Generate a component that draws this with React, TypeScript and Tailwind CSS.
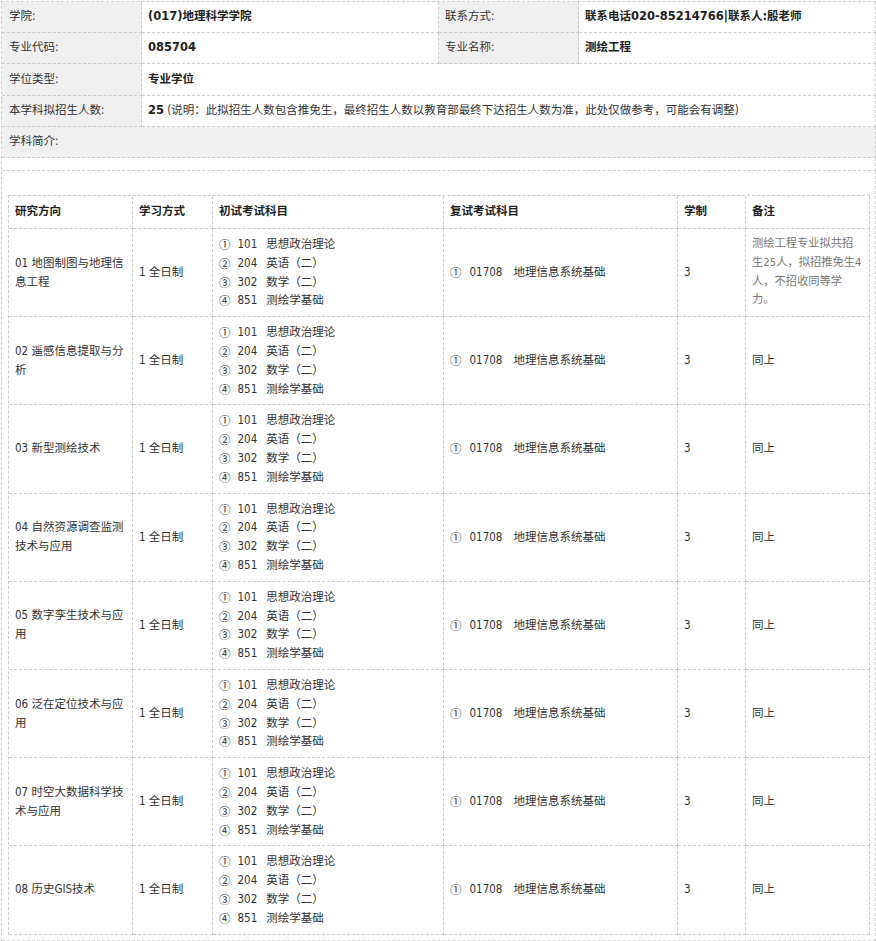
import React from 'react';

const cell = 'flex items-center border-r border-b border-dashed border-[#ccc]';
const boldFont = "font-bold text-[#222] font-['DejaVu_Sans','Noto_Sans_CJK_SC',sans-serif]";
const cjk = "font-['Noto_Sans_CJK_SC',sans-serif]";

type Row = { name: string; remark?: string };

const rows: Row[] = [
  { name: '01 地图制图与地理信息工程', remark: '测绘工程专业拟共招生25人，拟招推免生4人，不招收同等学力。' },
  { name: '02 遥感信息提取与分析' },
  { name: '03 新型测绘技术' },
  { name: '04 自然资源调查监测技术与应用' },
  { name: '05 数字孪生技术与应用' },
  { name: '06 泛在定位技术与应用' },
  { name: '07 时空大数据科学技术与应用' },
  { name: '08 历史GIS技术' },
];

const exams = [
  ['①', '101', '思想政治理论'],
  ['②', '204', '英语（二）'],
  ['③', '302', '数学（二）'],
  ['④', '851', '测绘学基础'],
];

function Label({ children, first }: { children: React.ReactNode; first?: boolean }) {
  return (
    <div className={`${cell} bg-[#f0f0f0] ${first ? 'pl-[7px]' : 'pl-[6px]'}`}>{children}</div>
  );
}

function Value({ children, className = '' }: { children: React.ReactNode; className?: string }) {
  return <div className={`${cell} bg-white px-[6px] ${className}`}>{children}</div>;
}

const innerCols = 'grid grid-cols-[124px_80px_231px_234px_68px_124px]';

export default function App() {
  return (
    <div className="ml-[1px] mt-[1px] w-[875px] border-l border-t border-dashed border-[#ccc] bg-white text-[11.5px] text-[#333] font-['DejaVu_Sans_Condensed','Noto_Sans_CJK_SC',sans-serif]">
      <div className="grid h-[31px] grid-cols-[140px_297px_140px_297px]">
        <Label first>学院:</Label>
        <Value className={boldFont}>(017)地理科学学院</Value>
        <Label>联系方式:</Label>
        <Value className={boldFont}>联系电话020-85214766|联系人:殷老师</Value>
      </div>
      <div className="grid h-[31px] grid-cols-[140px_297px_140px_297px]">
        <Label first>专业代码:</Label>
        <Value className={boldFont}>085704</Value>
        <Label>专业名称:</Label>
        <Value className={boldFont}>测绘工程</Value>
      </div>
      <div className="grid h-[32px] grid-cols-[140px_297px_140px_297px]">
        <Label first>学位类型:</Label>
        <Value className={`col-span-3 ${boldFont}`}>专业学位</Value>
      </div>
      <div className="grid h-[31px] grid-cols-[140px_297px_140px_297px]">
        <Label first>本学科拟招生人数:</Label>
        <Value className="col-span-3 whitespace-pre">
          <span className={boldFont}>25</span>
          {' (说明：此拟招生人数包含推免生，最终招生人数以教育部最终下达招生人数为准，此处仅做参考，可能会有调整)'}
        </Value>
      </div>
      <div className={`${cell} h-[31px] bg-[#f0f0f0] pl-[7px]`}>学科简介:</div>
      <div className={`${cell} h-[13px]`} />

      <div className="border-r border-b border-dashed border-[#ccc] px-[6px] pt-[24px] pb-[5px]">
        <div className="w-[862px] border-l border-t border-dashed border-[#ccc]">
          <div className={`${innerCols} h-[33px] font-bold text-[#222]`}>
            <div className={`${cell} px-[6px]`}>研究方向</div>
            <div className={`${cell} px-[6px]`}>学习方式</div>
            <div className={`${cell} px-[6px]`}>初试考试科目</div>
            <div className={`${cell} px-[6px]`}>复试考试科目</div>
            <div className={`${cell} px-[6px]`}>学制</div>
            <div className={`${cell} px-[6px]`}>备注</div>
          </div>

          {rows.map((r) => (
            <div key={r.name} className={innerCols}>
              <div className={`${cell} px-[6px] leading-[19px]`}>{r.name}</div>
              <div className={`${cell} px-[6px]`}>1 全日制</div>
              <div className={`${cell} flex-col !items-start justify-center px-[6px] py-[6px] leading-[18.8px]`}>
                {exams.map(([n, code, title]) => (
                  <div key={code} className="flex">
                    <span className={`w-[11.5px] ${cjk}`}>{n}</span>
                    <span className="ml-[7px]">{code}</span>
                    <span className="ml-[9px]">{title}</span>
                  </div>
                ))}
              </div>
              <div className={`${cell} px-[6px]`}>
                <span className={`w-[11.5px] ${cjk}`}>①</span>
                <span className="ml-[8px]">01708</span>
                <span className="ml-[11px]">地理信息系统基础</span>
              </div>
              <div className={`${cell} px-[6px]`}>3</div>
              <div className={`${cell} px-[6px]`}>
                {r.remark ? (
                  <span className="text-[11.25px] leading-[18.8px] text-[#777]">{r.remark}</span>
                ) : (
                  '同上'
                )}
              </div>
            </div>
          ))}
        </div>
      </div>
    </div>
  );
}
